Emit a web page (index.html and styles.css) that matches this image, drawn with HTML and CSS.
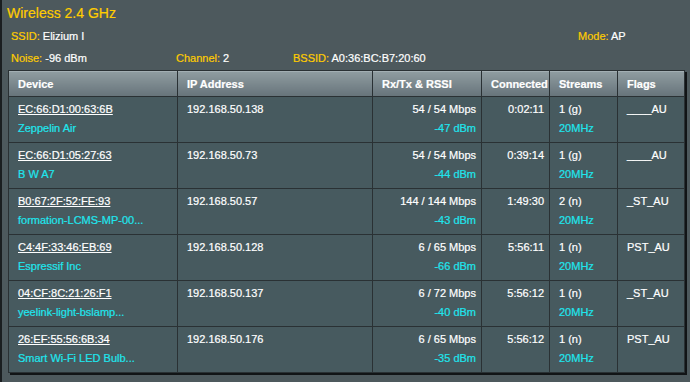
FILE: index.html
```html
<!DOCTYPE html>
<html>
<head>
<meta charset="utf-8">
<link rel="stylesheet" href="styles.css">
</head>
<body>
<div class="page">
  <div class="title">Wireless 2.4 GHz</div>
  <div class="info">
    <div class="item"><span class="lbl">SSID:</span> Elizium I</div>
    <div></div>
    <div></div>
    <div class="item"><span class="lbl">Mode:</span> AP</div>
    <div class="item"><span class="lbl">Noise:</span> -96 dBm</div>
    <div class="item"><span class="lbl">Channel:</span> 2</div>
    <div class="item"><span class="lbl">BSSID:</span> A0:36:BC:B7:20:60</div>
    <div></div>
  </div>
  <table class="clients">
    <colgroup>
      <col class="c-dev"><col class="c-ip"><col class="c-rx"><col class="c-con"><col class="c-str"><col class="c-flg">
    </colgroup>
    <thead>
      <tr><th>Device</th><th>IP Address</th><th>Rx/Tx &amp; RSSI</th><th>Connected</th><th>Streams</th><th>Flags</th></tr>
    </thead>
    <tbody>
      <tr>
        <td><div class="mac">EC:66:D1:00:63:6B</div><div class="cy">Zeppelin Air</div></td>
        <td>192.168.50.138</td>
        <td class="r"><div>54 / 54 Mbps</div><div class="cy">-47 dBm</div></td>
        <td class="r">0:02:11</td>
        <td><div>1 (g)</div><div class="cy">20MHz</div></td>
        <td>____AU</td>
      </tr>
      <tr>
        <td><div class="mac">EC:66:D1:05:27:63</div><div class="cy">B W A7</div></td>
        <td>192.168.50.73</td>
        <td class="r"><div>54 / 54 Mbps</div><div class="cy">-44 dBm</div></td>
        <td class="r">0:39:14</td>
        <td><div>1 (g)</div><div class="cy">20MHz</div></td>
        <td>____AU</td>
      </tr>
      <tr>
        <td><div class="mac">B0:67:2F:52:FE:93</div><div class="cy">formation-LCMS-MP-00...</div></td>
        <td>192.168.50.57</td>
        <td class="r"><div>144 / 144 Mbps</div><div class="cy">-43 dBm</div></td>
        <td class="r">1:49:30</td>
        <td><div>2 (n)</div><div class="cy">20MHz</div></td>
        <td>_ST_AU</td>
      </tr>
      <tr>
        <td><div class="mac">C4:4F:33:46:EB:69</div><div class="cy">Espressif Inc</div></td>
        <td>192.168.50.128</td>
        <td class="r"><div>6 / 65 Mbps</div><div class="cy">-66 dBm</div></td>
        <td class="r">5:56:11</td>
        <td><div>1 (n)</div><div class="cy">20MHz</div></td>
        <td>PST_AU</td>
      </tr>
      <tr>
        <td><div class="mac">04:CF:8C:21:26:F1</div><div class="cy">yeelink-light-bslamp...</div></td>
        <td>192.168.50.137</td>
        <td class="r"><div>6 / 72 Mbps</div><div class="cy">-40 dBm</div></td>
        <td class="r">5:56:12</td>
        <td><div>1 (n)</div><div class="cy">20MHz</div></td>
        <td>_ST_AU</td>
      </tr>
      <tr>
        <td><div class="mac">26:EF:55:56:6B:34</div><div class="cy">Smart Wi-Fi LED Bulb...</div></td>
        <td>192.168.50.176</td>
        <td class="r"><div>6 / 65 Mbps</div><div class="cy">-35 dBm</div></td>
        <td class="r">5:56:12</td>
        <td><div>1 (n)</div><div class="cy">20MHz</div></td>
        <td>PST_AU</td>
      </tr>
    </tbody>
  </table>
</div>
</body>
</html>
```
FILE: styles.css
```css
html, body {
  margin: 0;
  padding: 0;
  background: #4d595d;
}
body {
  font-family: "Liberation Sans", Arial, sans-serif;
  font-size: 11px;
  color: #ffffff;
  -webkit-text-stroke: 0.2px;
}
.page {
  width: 688px;
  height: 382px;
  border-left: 2px solid #1a1e20;
  padding: 0 0 0 6px;
  box-sizing: border-box;
  overflow: hidden;
}
.title {
  color: #ffcc00;
  font-size: 14px;
  line-height: 24px;
  padding-top: 1px;
  height: 24px;
  margin-left: -1px;
}
.info {
  display: grid;
  grid-template-columns: 165px 117px 285px 1fr;
  grid-auto-rows: 22px;
  align-items: center;
  padding-left: 3px;
  white-space: nowrap;
}
.lbl {
  color: #ffcc00;
}
.clients {
  margin-top: 1px;
  width: 676px;
  table-layout: fixed;
  border-collapse: collapse;
  box-shadow: 2px 2px 0 #111416;
}
.c-dev { width: 169px; }
.c-ip { width: 195px; }
.c-rx { width: 109px; }
.c-con { width: 68px; }
.c-str { width: 68px; }
.c-flg { width: 67px; }
.clients th {
  height: 25px;
  padding: 0 0 0 9px;
  text-align: left;
  font-weight: bold;
  color: #ffffff;
  border: 1px solid #2a3134;
  background: linear-gradient(#909da1, #66737a);
  box-shadow: inset 0 1px 0 #a3afb3;
  white-space: nowrap;
  overflow: hidden;
}
.clients td {
  height: 38px;
  padding: 3px 5px 4px 9px;
  vertical-align: top;
  line-height: 19px;
  background: #475a5f;
  border: 1px solid #2a3134;
  white-space: nowrap;
  overflow: hidden;
}
.clients td.r {
  text-align: right;
}
.mac {
  text-decoration: underline;
}
.cy {
  color: #1ee6ee;
}
```
